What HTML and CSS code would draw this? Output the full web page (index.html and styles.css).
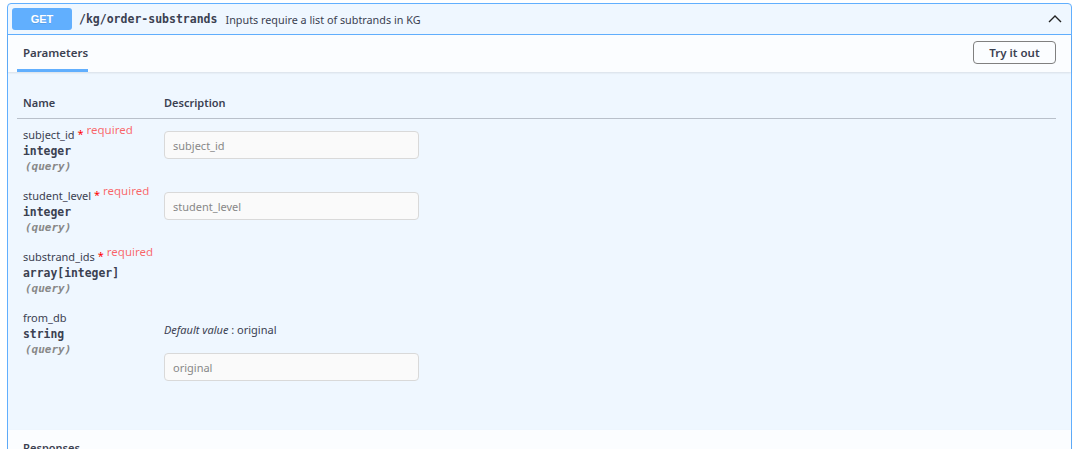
FILE: index.html
```html
<!DOCTYPE html>
<html>
<head>
<meta charset="utf-8">
<link rel="stylesheet" href="styles.css">
</head>
<body>
<div class="page">
  <div class="opblock">
    <div class="summary">
      <span class="method">GET</span>
      <span class="path">/kg/order-substrands</span>
      <span class="desc">Inputs require a list of subtrands in KG</span>
      <svg class="chev" width="14" height="9" viewBox="0 0 14 9"><path d="M1 8 L7 2 L13 8" fill="none" stroke="#222" stroke-width="1.4"/></svg>
    </div>
    <div class="section-header">
      <div class="tab">Parameters</div>
      <button class="try">Try it out</button>
    </div>
    <div class="params">
      <div class="table">
        <div class="thead">
          <div class="cell-name">Name</div>
          <div class="cell-desc">Description</div>
        </div>
        <div class="row">
          <div class="cell-name">
            <div class="pname">subject_id<span class="star">&nbsp;*</span><span class="req">required</span></div>
            <div class="ptype">integer</div>
            <div class="pin">(query)</div>
          </div>
          <div class="cell-desc"><input class="inp" placeholder="subject_id"></div>
        </div>
        <div class="row">
          <div class="cell-name">
            <div class="pname">student_level<span class="star">&nbsp;*</span><span class="req">required</span></div>
            <div class="ptype">integer</div>
            <div class="pin">(query)</div>
          </div>
          <div class="cell-desc"><input class="inp" placeholder="student_level"></div>
        </div>
        <div class="row">
          <div class="cell-name">
            <div class="pname">substrand_ids<span class="star">&nbsp;*</span><span class="req">required</span></div>
            <div class="ptype">array[integer]</div>
            <div class="pin">(query)</div>
          </div>
          <div class="cell-desc"></div>
        </div>
        <div class="row last">
          <div class="cell-name">
            <div class="pname">from_db</div>
            <div class="ptype">string</div>
            <div class="pin">(query)</div>
          </div>
          <div class="cell-desc">
            <div class="default"><i>Default value</i> : original</div>
            <input class="inp" placeholder="original">
          </div>
        </div>
      </div>
    </div>
    <div class="section-header resp">
      <div class="resp-title">Responses</div>
    </div>
  </div>
</div>
</body>
</html>
```
FILE: styles.css
```css
html, body {
  margin: 0;
  padding: 0;
  background: #fff;
  overflow: hidden;
}
.page {
  padding: 3px 9px 0 7px;
  font-family: "Noto Sans", "Open Sans", sans-serif;
  color: #3b4151;
}
.opblock {
  border: 1px solid #61affe;
  border-radius: 4px;
  background: #eff7ff;
  height: 600px;
}
.summary {
  display: flex;
  align-items: center;
  height: 30px;
  padding: 0 5px 0 4px;
  border-bottom: 1px solid #61affe;
}
.method {
  width: 60px;
  height: 22px;
  line-height: 22px;
  background: #61affe;
  color: #fff;
  border-radius: 3px;
  text-align: center;
  font-size: 11px;
  font-weight: 700;
  text-shadow: 0 1px 0 rgba(0,0,0,.1);
  font-family: "Liberation Sans", sans-serif;
}
.path {
  font-family: "DejaVu Sans Mono", monospace;
  font-weight: 700;
  font-size: 11.5px;
  color: #3b4151;
  padding: 0 8px 0 7px;
}
.desc {
  font-size: 10.8px;
  color: #3b4151;
  flex: 1;
}
.chev {
  margin-right: 4px;
  margin-top: -1px;
}
.section-header {
  display: flex;
  align-items: center;
  justify-content: space-between;
  height: 37px;
  padding: 0 15px 0 9px;
  background: #fbfdff;
  box-shadow: 0 1px 2px rgba(0,0,0,.1);
}
.tab {
  align-self: flex-end;
  font-size: 11.5px;
  font-weight: 600;
  padding: 0 6px;
  height: 34px;
  line-height: 35px;
  border-bottom: 3px solid #61affe;
  box-sizing: content-box;
  width: 59px;
}
.try {
  width: 83px;
  height: 23px;
  margin-top: -2px;
  border: 1.5px solid #808080;
  border-radius: 4px;
  background: transparent;
  font-family: "Noto Sans", "Open Sans", sans-serif;
  font-size: 11.5px;
  font-weight: 600;
  color: #3b4151;
  padding: 0;
}
.params {
  padding: 14px 15px 0 9px;
  height: 344px;
}
.thead {
  display: grid;
  grid-template-columns: 147px 1fr;
  height: 32px;
  align-items: center;
  border-bottom: 1px solid rgba(59,65,81,.3);
  font-size: 11px;
  font-weight: 600;
}
.thead .cell-name {
  padding-left: 6px;
}
.row {
  display: grid;
  grid-template-columns: 147px 1fr;
  height: 61px;
}
.row .cell-name {
  padding: 8px 0 0 6px;
}
.row .cell-desc {
  padding-top: 12px;
}
.pname {
  font-size: 11px;
  line-height: 16px;
  height: 16px;
}
.star {
  color: red;
  font-size: 11px;
  position: relative;
  top: -1px;
}
.req {
  color: rgba(255,0,0,.6);
  font-size: 11.5px;
  position: relative;
  top: -5px;
  padding-left: 3px;
}
.ptype {
  font-family: "DejaVu Sans Mono", monospace;
  font-size: 11.4px;
  font-weight: 700;
  line-height: 16px;
}
.pin {
  font-family: "DejaVu Sans Mono", monospace;
  font-size: 11px;
  font-style: italic;
  font-weight: 700;
  color: #888;
  line-height: 16px;
  padding-left: 2px;
}
.inp {
  display: block;
  box-sizing: border-box;
  width: 255px;
  height: 28px;
  margin: 0;
  border: 1px solid #d9d9d9;
  border-radius: 4px;
  background: #fafafa;
  padding: 0 8px;
  font-family: "Noto Sans", "Open Sans", sans-serif;
  font-size: 11px;
  color: #3b4151;
  outline: none;
}
.inp::placeholder {
  color: #888;
}
.row.last .cell-desc {
  padding-top: 20px;
}
.default {
  font-size: 11px;
  line-height: 16px;
  margin-bottom: 15px;
}
.section-header.resp {
  align-items: flex-start;
  padding-left: 15px;
}
.resp-title {
  font-size: 11px;
  font-weight: 600;
  padding-top: 10px;
}
```
